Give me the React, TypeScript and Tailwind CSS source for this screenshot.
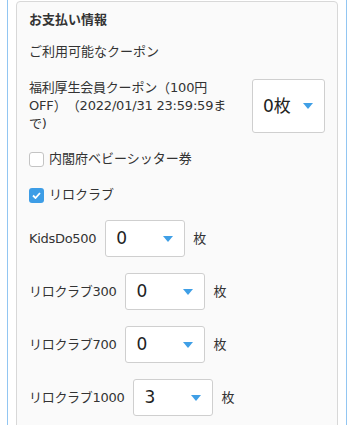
import React from 'react';

const font = { fontFamily: '"DejaVu Sans", "Noto Sans CJK JP", sans-serif' };

const Caret = () => (
  <svg width="10" height="6" viewBox="0 0 10 6" className="shrink-0">
    <path d="M0 0 L10 0 L5 6 Z" fill="#3f9fe6" />
  </svg>
);

interface SelectBoxProps {
  value: string;
  className: string;
}

const SelectBox: React.FC<SelectBoxProps> = ({ value, className }) => (
  <div
    className={`flex items-center justify-between rounded-[3px] border border-[#cfcfcf] bg-white pl-[10px] pr-[11px] text-[17px] text-[#222] ${className}`}
  >
    <span className="leading-none">{value}</span>
    <Caret />
  </div>
);

const Checkbox = ({ checked }: { checked: boolean }) =>
  checked ? (
    <span className="flex h-[15px] w-[15px] items-center justify-center rounded-[3px] bg-[#3d9de6]">
      <svg width="9" height="7" viewBox="0 0 9 7">
        <path d="M1 3.5 L3.5 6 L8 1" stroke="#fff" strokeWidth="1.8" fill="none" />
      </svg>
    </span>
  ) : (
    <span className="h-[15px] w-[15px] rounded-[3px] border border-[#c4c4c4] bg-white" />
  );

const rows = [
  { label: 'KidsDo500', value: '0' },
  { label: 'リロクラブ300', value: '0' },
  { label: 'リロクラブ700', value: '0' },
  { label: 'リロクラブ1000', value: '3' },
];

const Paren = ({ c }: { c: string }) => (
  <span className="inline-block h-[18px] w-[13px] overflow-hidden text-center align-top leading-[18px] font-['Noto_Sans_CJK_JP']">
    {c}
  </span>
);

export default function App() {
  return (
    <div className="h-[425px] w-[356px] overflow-hidden bg-white" style={font}>
      <div className="ml-[7px] h-full w-[340px] border-x border-[#92c6f2] px-2 pt-[1px]">
        <div className="rounded-t-[4px] border border-[#d8d8d8] bg-[#fafafa] pb-6 pl-3 pr-3 pt-[9px] text-[13px] leading-[18px] text-[#333]">
          <div className="font-bold">お支払い情報</div>
          <div className="mt-[14px]">ご利用可能なクーポン</div>

          <div className="mt-[18px] flex items-center justify-between">
            <div className="h-[54px] w-[216px] whitespace-nowrap tracking-[-0.2px]">
              <div className="h-[18px]">福利厚生会員クーポン<Paren c="（" />100円</div>
              <div className="h-[18px]">OFF<Paren c="）" /><Paren c="（" />2022/01/31 23:59:59ま</div>
              <div className="h-[18px]">で)</div>
            </div>
            <SelectBox value="0枚" className="h-[54px] w-[73px]" />
          </div>

          <label className="mt-[17px] flex items-center gap-[5px]">
            <Checkbox checked={false} />
            <span>内閣府ベビーシッター券</span>
          </label>
          <label className="mt-[18px] flex items-center gap-[5px]">
            <Checkbox checked />
            <span>リロクラブ</span>
          </label>

          <div className="mt-[16px] flex flex-col gap-[16px]">
            {rows.map((r) => (
              <div key={r.label} className="flex items-center">
                <span className="tracking-[-0.3px]">{r.label}</span>
                <SelectBox value={r.value} className="ml-[9px] h-[37px] w-[80px]" />
                <span className="ml-[8px]">枚</span>
              </div>
            ))}
          </div>
        </div>
      </div>
    </div>
  );
}
